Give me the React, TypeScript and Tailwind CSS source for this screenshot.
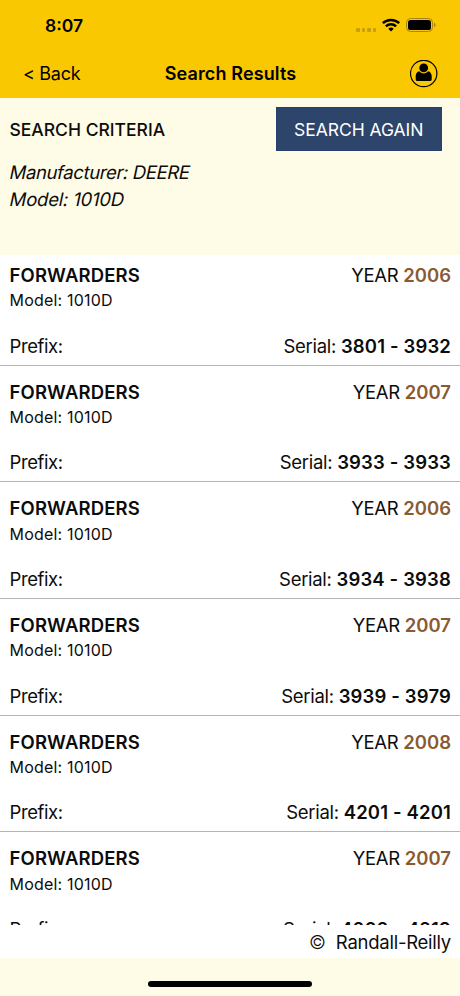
import React from 'react';

interface SearchResult {
  id: number;
  category: string;
  model: string;
  year: number;
  prefix: string;
  serial: string;
}

const results: SearchResult[] = [
  { id: 1, category: 'FORWARDERS', model: '1010D', year: 2006, prefix: '', serial: '3801 - 3932' },
  { id: 2, category: 'FORWARDERS', model: '1010D', year: 2007, prefix: '', serial: '3933 - 3933' },
  { id: 3, category: 'FORWARDERS', model: '1010D', year: 2006, prefix: '', serial: '3934 - 3938' },
  { id: 4, category: 'FORWARDERS', model: '1010D', year: 2007, prefix: '', serial: '3939 - 3979' },
  { id: 5, category: 'FORWARDERS', model: '1010D', year: 2008, prefix: '', serial: '4201 - 4201' },
  { id: 6, category: 'FORWARDERS', model: '1010D', year: 2007, prefix: '', serial: '4202 - 4219' },
];

const StatusBar: React.FC = () => (
  <div className="flex h-[50px] items-center justify-between pl-[45px] pr-[24px]">
    <span className="mt-[2px] text-[17.5px] font-semibold leading-6">8:07</span>
    <div className="flex items-center">
      <div className="mt-[10px] flex gap-[2px]">
        {[0, 1, 2, 3].map(dot => (
          <span key={dot} className="h-[3.5px] w-[3.5px] rounded-[1px] bg-[#c99f10]" />
        ))}
      </div>
      <svg className="ml-[5px]" width="20" height="14" viewBox="0 0 20 14">
        <path d="M1.8 5.2a12 12 0 0 1 16.4 0M4.9 8.4a7.4 7.4 0 0 1 10.2 0" fill="none" stroke="#000" strokeWidth="2.5" />
        <path d="M7.3 10.8a3.9 3.9 0 0 1 5.4 0L10 13.5z" fill="#000" />
      </svg>
      <svg className="ml-[5px]" width="30" height="14" viewBox="0 0 30 14">
        <rect x="0.5" y="0.5" width="26" height="13" rx="4" fill="none" stroke="#a98408" />
        <rect x="2" y="2" width="23" height="10" rx="2.6" fill="#000" />
        <path d="M28 4.8c2 .6 2 3.8 0 4.4z" fill="#a98408" />
      </svg>
    </div>
  </div>
);

const NavBar: React.FC = () => (
  <div className="grid h-[48px] grid-cols-3 items-center pl-[23px] pr-[22px]">
    <button className="text-left text-[18px] leading-6 tracking-[-0.3px]">&lt; Back</button>
    <h1 className="whitespace-nowrap text-center text-[18px] font-semibold leading-6 tracking-[0.12px]">Search Results</h1>
    <button className="justify-self-end" aria-label="Account">
      <svg width="28" height="28" viewBox="0 0 28 28">
        <circle cx="13.7" cy="13.5" r="13.2" fill="none" stroke="#000" strokeWidth="1.2" />
        <circle cx="13.7" cy="7.9" r="4.4" fill="#000" />
        <path d="M9.300 11.300c1.100 1.400 2.700 2.100 4.400 2.100s3.300-.7 4.400-2.100c2.300.4 3.600 2.300 3.600 5v2.600c0 1.500-.8 2.200-2.300 2.200H8c-1.500 0-2.300-.7-2.300-2.200v-2.600c0-2.700 1.300-4.600 3.600-5z" fill="#000" />
      </svg>
    </button>
  </div>
);

const ResultRow: React.FC<{ result: SearchResult }> = ({ result }) => (
  <li className="h-[116.67px] border-b border-[#b4b4b6] pl-[9.5px] pr-[9px] pt-[13.9px]">
    <div className="flex justify-between text-[18.5px] leading-6">
      <span className="font-semibold tracking-[0.15px]">{result.category}</span>
      <span className="tracking-[-0.3px]">
        YEAR <span className="font-semibold tracking-normal text-[#8b5a30]">{result.year}</span>
      </span>
    </div>
    <p className="mt-[1.6px] text-[16px] leading-6 tracking-[0.2px]">Model: {result.model}</p>
    <div className="mt-[21.2px] flex justify-between text-[18.5px] leading-6">
      <span className="tracking-[-0.4px]">Prefix: {result.prefix}</span>
      <span className="tracking-[-0.3px]">
        Serial: <span className="font-semibold tracking-[0.15px]">{result.serial}</span>
      </span>
    </div>
  </li>
);

const App: React.FC = () => (
  <div className="flex h-[996px] w-[460px] flex-col overflow-hidden bg-[#fefbe6] font-['Inter',sans-serif] text-[#0c0c0c]">
    <header className="h-[98px] shrink-0 bg-[#fac800] text-black">
      <StatusBar />
      <NavBar />
    </header>

    {/* Search criteria */}
    <section className="h-[157px] shrink-0 pl-[9.5px] pr-[18px] pt-[9px]">
      <div className="flex items-center justify-between">
        <h2 className="mt-px text-[17.5px] font-medium leading-6">SEARCH CRITERIA</h2>
        <button className="h-[44px] w-[166.5px] border border-[#27406f] bg-[#2e456b] pt-[2px] text-[17.5px] tracking-[-0.05px] text-white">
          SEARCH AGAIN
        </button>
      </div>
      {/* slanted roman letterforms */}
      <div className="mt-[8px] text-[18.5px] leading-[27px]">
        <p className="-skew-x-12 tracking-[-0.37px]">Manufacturer: DEERE</p>
        <p className="-skew-x-12 tracking-[-0.2px]">Model: 1010D</p>
      </div>
    </section>

    {/* Results, cut off by the footer */}
    <main className="h-[670px] shrink-0 overflow-hidden bg-white">
      <ul className="-mt-[6px]">
        {results.map(result => (
          <ResultRow key={result.id} result={result} />
        ))}
      </ul>
    </main>

    <footer className="flex h-[33px] shrink-0 items-center justify-end gap-[10px] bg-white px-[9px] pt-[1px] text-[18.5px] leading-6">
      <span className="font-light">©</span>
      <span className="tracking-[-0.25px]">Randall-Reilly</span>
    </footer>

    <div className="mx-auto mt-[23px] h-[6px] w-[164px] shrink-0 rounded-full bg-black" />
  </div>
);

export default App;
